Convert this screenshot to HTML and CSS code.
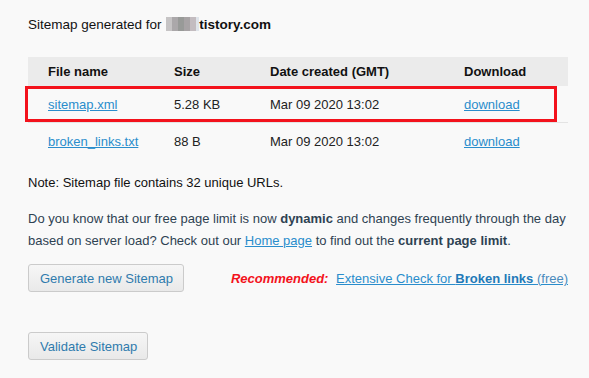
FILE: index.html
```html
<!DOCTYPE html>
<html lang="en">
<head>
  <meta charset="UTF-8" />
  <title>Sitemap generated</title>
  <link rel="stylesheet" href="styles.css">
</head>
<body>
  <div class="page">
    <h1 class="title">Sitemap generated for <b><span class="blur"><i></i><i></i><i></i><i></i><i></i><i></i></span>tistory.com</b></h1>

    <div class="files">
      <table>
        <colgroup>
          <col class="c-name"><col class="c-size"><col class="c-date"><col>
        </colgroup>
        <thead>
          <tr><th>File name</th><th>Size</th><th>Date created (GMT)</th><th>Download</th></tr>
        </thead>
        <tbody>
          <tr><td><a href="#">sitemap.xml</a></td><td>5.28 KB</td><td>Mar 09 2020 13:02</td><td><a href="#">download</a></td></tr>
          <tr><td><a href="#">broken_links.txt</a></td><td>88 B</td><td>Mar 09 2020 13:02</td><td><a href="#">download</a></td></tr>
        </tbody>
      </table>
      <div class="highlight"></div>
    </div>

    <p class="note">Note: Sitemap file contains 32 unique URLs.</p>

    <p class="info">Do you know that our free page limit is now <b>dynamic</b> and changes frequently through the day based on server load? Check out our <a href="#">Home page</a> to find out the <b>current page limit</b>.</p>

    <div class="actions">
      <button class="btn">Generate new Sitemap</button>
      <div class="recommend">
        <em>Recommended:</em>
        <a href="#">Extensive Check for <b>Broken links </b><span class="free">(free)</span></a>
      </div>
    </div>

    <button class="btn">Validate Sitemap</button>
  </div>
</body>
</html>
```

FILE: styles.css
```css
body {
  margin: 0;
  background: #f9f9f9;
  font-family: 'Liberation Sans', Arial, sans-serif;
  font-size: 13px;
  color: #111;
}
.page {
  width: 540px;
  padding: 17px 28px;
}
.title {
  font-size: 13.5px;
  font-weight: normal;
  margin: 0 0 25px;
  line-height: 15px;
}
.title b {
  font-weight: bold;
}
.blur {
  display: inline-flex;
  vertical-align: -2px;
  height: 14px;
  margin-left: 1px;
}
.blur i {
  width: 6px;
  height: 14px;
  background: #b9b9b9;
}
.blur i:nth-child(1) { background: #c6c4c5; }
.blur i:nth-child(2) { background: #aba8aa; }
.blur i:nth-child(3) { background: #989a98; }
.blur i:nth-child(4) { background: #a7a3a5; }
.blur i:nth-child(5) { background: #c3bcc0; }
.blur i:nth-child(6) { background: #dfe4ea; width: 3px; }
a {
  color: #2a8dcc;
}
.files {
  position: relative;
}
table {
  width: 540px;
  border-collapse: collapse;
  table-layout: fixed;
}
.c-name { width: 126px; }
.c-size { width: 96px; }
.c-date { width: 194px; }
th, td {
  text-align: left;
  padding: 0 20px;
  white-space: nowrap;
}
th {
  background: #ebebeb;
  height: 29px;
  font-weight: bold;
  color: #111;
}
td {
  height: 35px;
  padding-top: 1px;
  color: #222;
}
tbody tr:first-child td {
  border-bottom: 1px solid #e4e4e4;
}
.highlight {
  position: absolute;
  left: -3px;
  top: 29px;
  width: 526px;
  height: 30px;
  border: 3px solid #f3121c;
}
.note {
  margin: 16px 0 0;
}
.info {
  margin: 18px 0 0;
  line-height: 22px;
  color: #2e4252;
}
.info b {
  color: #2e4252;
}
.actions {
  display: flex;
  justify-content: space-between;
  align-items: center;
  margin: 12px 0 40px;
}
.btn {
  font-family: 'Liberation Sans', Arial, sans-serif;
  font-size: 13px;
  color: #2f7bad;
  background: linear-gradient(#f6f6f6, #e9e9e9);
  border: 1px solid #cbcbcb;
  border-radius: 3px;
  height: 28px;
  padding: 0 10px 0 11px;
}
.recommend em {
  color: #f3121c;
  font-weight: bold;
  margin-right: 4px;
}
.recommend a b {
  color: #1f79b8;
}
.recommend .free {
  color: #4a8bbd;
}
```
